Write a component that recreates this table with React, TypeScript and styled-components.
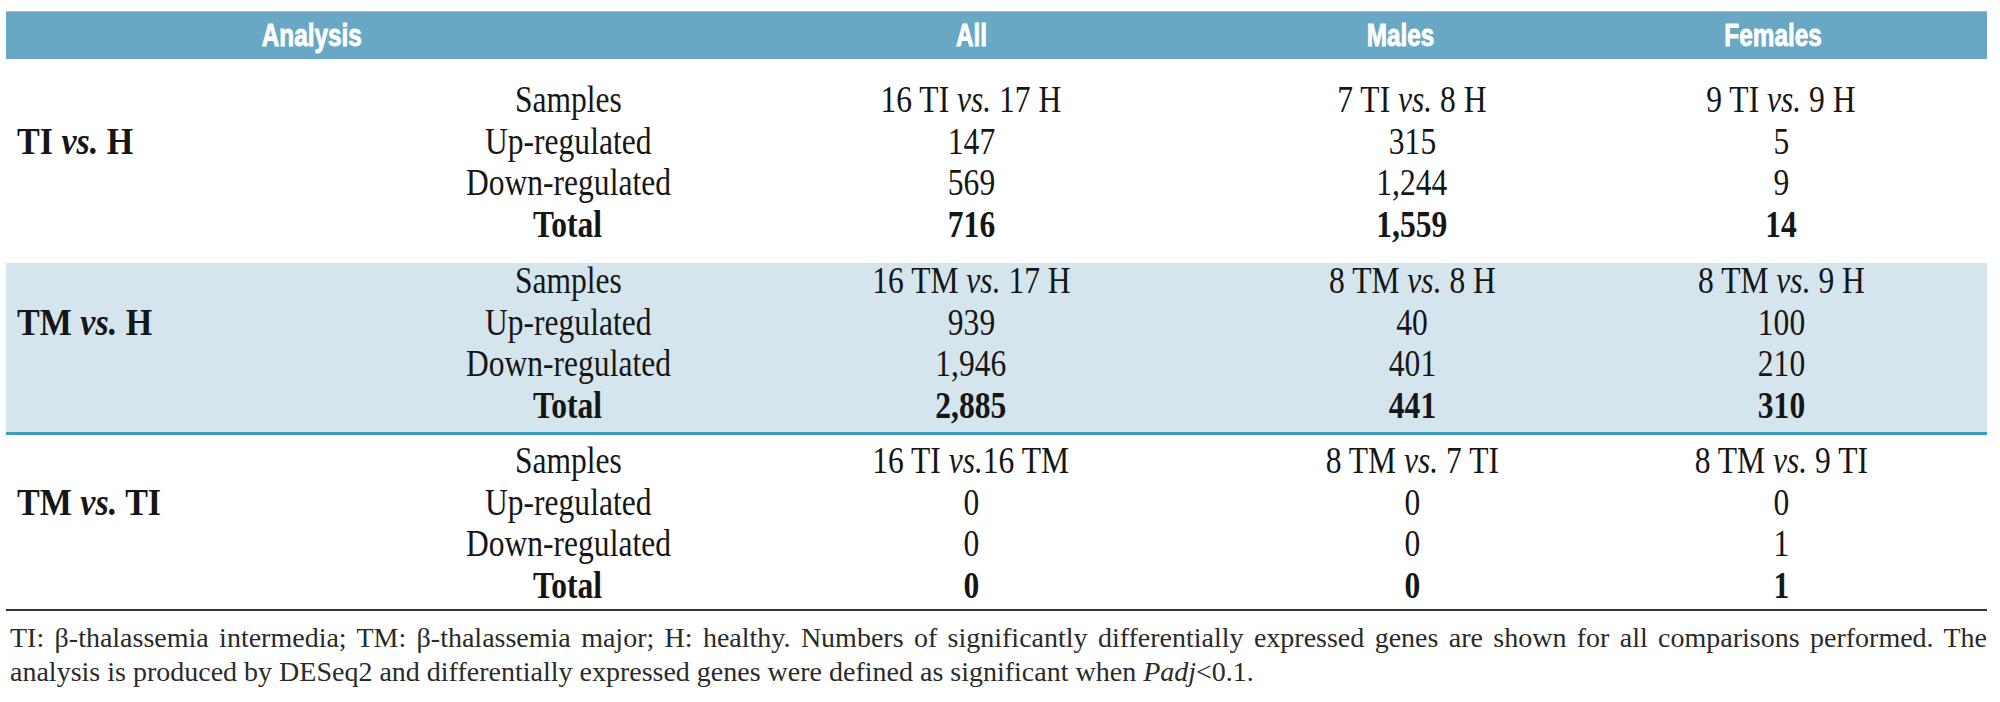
import React from 'react'
import styled, { createGlobalStyle } from 'styled-components'

const GlobalStyle = createGlobalStyle`
    html, body {
        margin: 0;
        padding: 0;
        background: #fff;
    }
    body {
        font-family: 'Liberation Serif', 'Times New Roman', serif;
        color: #161616;
    }
`

const COLS = '374px 376px 430px 452px 286px'

const Page = styled.div`
    width: 1981px;
    margin-left: 6px;
    padding-top: 11px;
`

const HeaderBar = styled.div`
    display: grid;
    grid-template-columns: ${COLS};
    padding-right: 63px;
    height: 48px;
    align-items: center;
    background: #68a8c5;
    box-shadow: inset 0 1px 0 #94c3d8;
`

const HeaderCell = styled.div<{ $span?: number; $nudge?: number }>`
    grid-column: span ${p => p.$span || 1};
    padding-right: ${p => p.$nudge || 0}px;
    text-align: center;
    font-family: 'Liberation Sans', Arial, sans-serif;
    font-weight: 700;
    font-size: 32px;
    line-height: 48px;
    color: #fff;
    -webkit-text-stroke: 0.9px #fff;
`

const Narrow = styled.span<{ $scale: number; $origin?: string }>`
    display: inline-block;
    white-space: nowrap;
    transform: scaleX(${p => p.$scale});
    transform-origin: ${p => p.$origin || 'center'};
`

const Section = styled.div<{ $top: number; $bottom: number; $tint?: boolean; $rule?: string }>`
    display: grid;
    grid-template-columns: ${COLS};
    grid-template-rows: repeat(4, 41.5px);
    padding: ${p => p.$top}px 63px ${p => p.$bottom}px 0;
    background: ${p => (p.$tint ? '#d4e5ee' : 'transparent')};
    border-bottom: ${p => p.$rule || 'none'};
`

const GroupLabel = styled.div`
    grid-column: 1;
    grid-row: 2;
    padding-left: 11px;
    font-weight: 700;
    font-size: 37px;
    line-height: 35px;
`

const Cell = styled.div<{ $col: number; $row: number; $bold?: boolean }>`
    grid-column: ${p => p.$col};
    grid-row: ${p => p.$row};
    text-align: center;
    font-size: 38px;
    line-height: 35px;
    font-weight: ${p => (p.$bold ? 700 : 400)};
`

const Note = styled.div`
    margin-top: 10px;
    padding-left: 4px;
    font-size: 28px;
    line-height: 34px;
    color: #2a2a2a;
`

const NoteLine = styled.div<{ $justify?: boolean }>`
    white-space: nowrap;
    text-align: ${p => (p.$justify ? 'justify' : 'left')};
    text-align-last: ${p => (p.$justify ? 'justify' : 'auto')};
`

type Samples = [string, string, string?]

interface Group {
    left: string
    right: string
    samples: Samples[]
    up: string[]
    down: string[]
    total: string[]
}

const groups: Group[] = [
    {
        left: 'TI',
        right: 'H',
        samples: [['16 TI', '17 H'], ['7 TI', '8 H'], ['9 TI', '9 H']],
        up: ['147', '315', '5'],
        down: ['569', '1,244', '9'],
        total: ['716', '1,559', '14'],
    },
    {
        left: 'TM',
        right: 'H',
        samples: [['16 TM', '17 H'], ['8 TM', '8 H'], ['8 TM', '9 H']],
        up: ['939', '40', '100'],
        down: ['1,946', '401', '210'],
        total: ['2,885', '441', '310'],
    },
    {
        left: 'TM',
        right: 'TI',
        samples: [['16 TI', '16 TM', ''], ['8 TM', '7 TI'], ['8 TM', '9 TI']],
        up: ['0', '0', '0'],
        down: ['0', '0', '1'],
        total: ['0', '0', '1'],
    },
]

const SQUEEZE = 0.83

const sectionFrames = [
    { top: 23, bottom: 15 },
    { top: 0, bottom: 3, tint: true, rule: '3px solid #3b9cc1' },
    { top: 8, bottom: 0, rule: '2px solid #333' },
]

const rowNames = ['Samples', 'Up-regulated', 'Down-regulated', 'Total']

function App() {
    return (
        <Page>
            <GlobalStyle />
            <HeaderBar>
                <HeaderCell $span={2} $nudge={138}><Narrow $scale={0.76}>Analysis</Narrow></HeaderCell>
                <HeaderCell><Narrow $scale={0.76}>All</Narrow></HeaderCell>
                <HeaderCell $nudge={24}><Narrow $scale={0.76}>Males</Narrow></HeaderCell>
                <HeaderCell $nudge={16}><Narrow $scale={0.76}>Females</Narrow></HeaderCell>
            </HeaderBar>

            {groups.map((g, i) => {
                const frame = sectionFrames[i]
                return (
                    <Section key={i} $top={frame.top} $bottom={frame.bottom} $tint={frame.tint} $rule={frame.rule}>
                        <GroupLabel>
                            <Narrow $scale={0.92} $origin='left'>
                                {g.left} <i>vs.</i> {g.right}
                            </Narrow>
                        </GroupLabel>
                        {rowNames.map((name, r) => (
                            <Cell key={name} $col={2} $row={r + 1} $bold={r === 3}>
                                <Narrow $scale={SQUEEZE}>{name}</Narrow>
                            </Cell>
                        ))}
                        {g.samples.map(([a, b, gap = ' '], c) => (
                            <Cell key={'s' + c} $col={c + 3} $row={1}>
                                <Narrow $scale={SQUEEZE}>{a} <i>vs.</i>{gap}{b}</Narrow>
                            </Cell>
                        ))}
                        {[g.up, g.down, g.total].map((vals, r) =>
                            vals.map((v, c) => (
                                <Cell key={r + '-' + c} $col={c + 3} $row={r + 2} $bold={r === 2}>
                                    <Narrow $scale={SQUEEZE}>{v}</Narrow>
                                </Cell>
                            )),
                        )}
                    </Section>
                )
            })}

            <Note>
                <NoteLine $justify>
                    TI: β-thalassemia intermedia; TM: β-thalassemia major; H: healthy. Numbers of significantly differentially expressed genes are shown for all comparisons performed. The
                </NoteLine>
                <NoteLine>
                    analysis is produced by DESeq2 and differentially expressed genes were defined as significant when <i>Padj</i>&lt;0.1.
                </NoteLine>
            </Note>
        </Page>
    )
}

export default App
